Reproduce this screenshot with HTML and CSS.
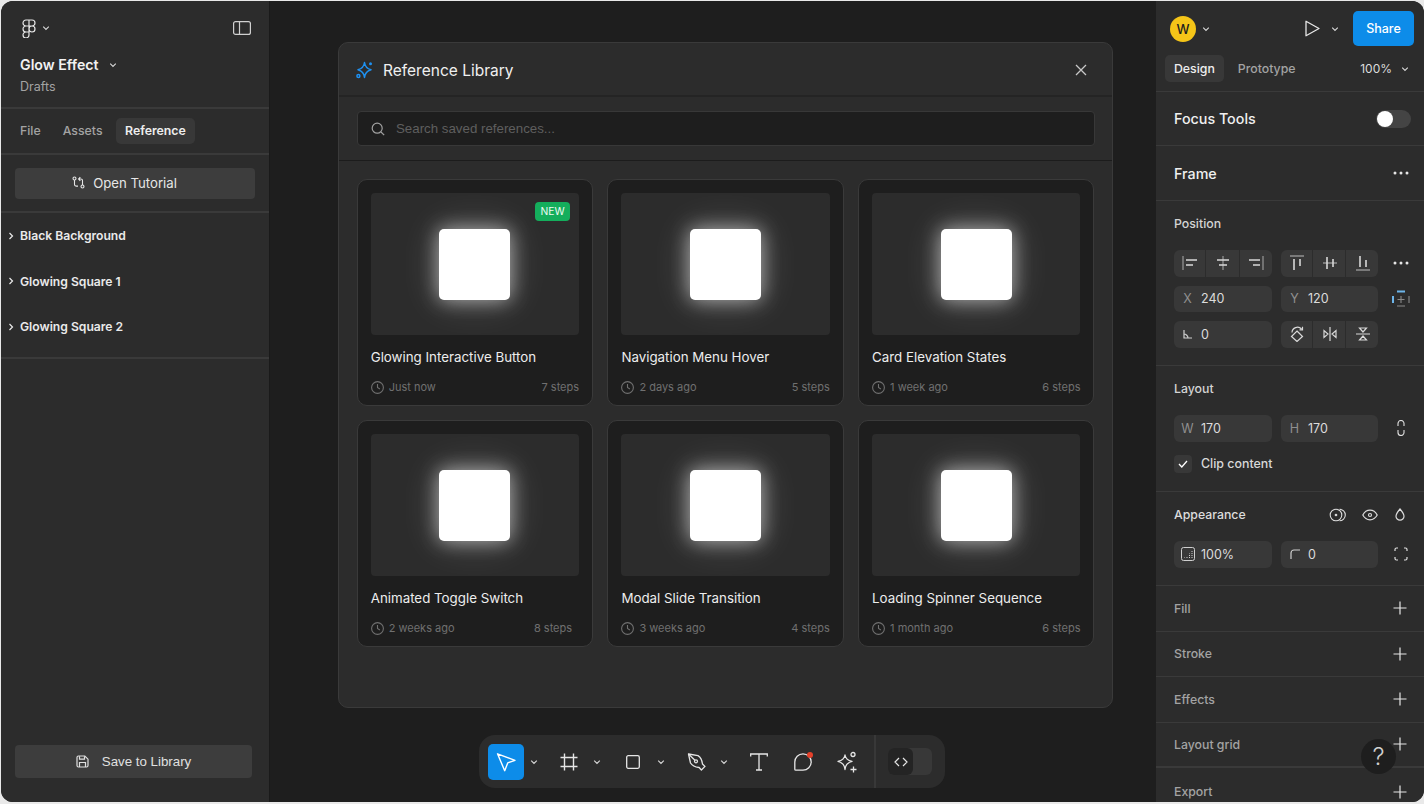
FILE: index.html
```html
<!DOCTYPE html>
<html lang="en">
<head>
    <meta charset="UTF-8">
    <title>Glow Effect</title>
    <link rel="stylesheet" href="styles.css">
</head>
<body>
    <svg class="defs" width="0" height="0">
        <symbol id="chev" viewBox="0 0 8 8"><path d="M1.2 2.6 4 5.4l2.8-2.8" fill="none" stroke="currentColor" stroke-width="1.2"/></symbol>
        <symbol id="plus" viewBox="0 0 14 14"><path d="M7 .5v13M.5 7h13" fill="none" stroke="currentColor" stroke-width="1.2"/></symbol>
        <symbol id="clock" viewBox="0 0 13 13"><g fill="none" stroke="currentColor" stroke-width="1.1"><circle cx="6.5" cy="6.5" r="5.9"/><path d="M6.5 3v3.5l2.4 1.4"/></g></symbol>
        <symbol id="dots" viewBox="0 0 16 4"><g fill="currentColor"><circle cx="2" cy="2" r="1.5"/><circle cx="8" cy="2" r="1.5"/><circle cx="14" cy="2" r="1.5"/></g></symbol>
    </svg>

    <div class="app">
        <aside class="left-panel">
            <div class="file-head">
                <div class="logo-row">
                    <svg class="logo" width="14" height="19" viewBox="0 0 14 19" fill="none" stroke="currentColor" stroke-width="1.2"><path d="M7 1H4a3 3 0 0 0 0 6h3zM7 1h3a3 3 0 0 1 0 6H7zM7 7H4a3 3 0 0 0 0 6h3zM7 13H4a3 3 0 1 0 3 3zM13 10a3 3 0 1 1-6 0 3 3 0 0 1 6 0z"/></svg>
                    <svg class="chev" width="8" height="8"><use href="#chev"/></svg>
                    <svg class="panel-toggle" width="18" height="14" viewBox="0 0 18 14" fill="none" stroke="currentColor" stroke-width="1.2"><rect x=".6" y=".6" width="16.8" height="12.8" rx="2"/><path d="M6.5 1v12"/></svg>
                </div>
                <div class="title-row">
                    <span class="file-title">Glow Effect</span>
                    <svg class="chev" width="8" height="8"><use href="#chev"/></svg>
                </div>
                <div class="file-sub">Drafts</div>
            </div>
            <nav class="left-tabs">
                <span class="left-tab">File</span>
                <span class="left-tab">Assets</span>
                <span class="left-tab active">Reference</span>
            </nav>
            <div class="tutorial-wrap">
                <button class="wide-btn tutorial-btn">
                    <svg width="13" height="13" viewBox="0 0 13 13" fill="none" stroke="currentColor" stroke-width="1.1"><circle cx="2.5" cy="2.5" r="1.5"/><circle cx="10.5" cy="10.5" r="1.5"/><path d="M2.5 4v4.5c0 1 .6 1.6 1.6 1.6H6M10.5 9V4.6C10.5 3.6 9.9 3 8.9 3H7M8.3 1.2 6.6 3l1.7 1.8"/></svg>
                    <span>Open Tutorial</span>
                </button>
            </div>
            <ul class="layers">
                <li class="layer"><svg width="6" height="8" viewBox="0 0 6 8"><path d="M1.5 1 4.5 4l-3 3" fill="none" stroke="currentColor" stroke-width="1.2"/></svg>Black Background</li>
                <li class="layer"><svg width="6" height="8" viewBox="0 0 6 8"><path d="M1.5 1 4.5 4l-3 3" fill="none" stroke="currentColor" stroke-width="1.2"/></svg>Glowing Square 1</li>
                <li class="layer"><svg width="6" height="8" viewBox="0 0 6 8"><path d="M1.5 1 4.5 4l-3 3" fill="none" stroke="currentColor" stroke-width="1.2"/></svg>Glowing Square 2</li>
            </ul>
            <div class="left-foot">
                <button class="wide-btn save-btn">
                    <svg width="13" height="13" viewBox="0 0 13 13" fill="none" stroke="currentColor" stroke-width="1.2"><path d="M1 2.500C1 1.700 1.700 1 2.500 1h6.300L12 4.200v6.300c0 .8-.7 1.500-1.500 1.500h-8c-.8 0-1.500-.7-1.500-1.500z"/><path d="M3.500 1.200v3h5v-3M3.500 12V7.500h6V12"/></svg>
                    <span>Save to Library</span>
                </button>
            </div>
        </aside>

        <main class="canvas">
            <section class="modal">
                <header class="modal-head">
                    <svg class="spark" width="18" height="18" viewBox="0 0 18 18" fill="none" stroke="currentColor" stroke-width="1.5" stroke-linejoin="round"><path d="M8.500 1.500C9 5.500 10.500 7.500 15 8.800 10.500 10 9 12 8.500 16.500 8 12 6.500 10 2 8.800 6.500 7.500 8 5.500 8.500 1.500z"/><circle cx="14.500" cy="2.800" r="1.500" fill="currentColor" stroke="none"/><circle cx="2.400" cy="15" r="1.500"/></svg>
                    <h2 class="modal-title">Reference Library</h2>
                    <svg class="modal-close" width="12" height="12" viewBox="0 0 12 12"><path d="M1 1l10 10M11 1 1 11" fill="none" stroke="currentColor" stroke-width="1.3"/></svg>
                </header>
                <div class="search-wrap">
                    <div class="search-box">
                        <svg width="14" height="14" viewBox="0 0 14 14" fill="none" stroke="currentColor" stroke-width="1.2"><circle cx="6.200" cy="6.200" r="5"/><path d="m10 10 3.200 3.200"/></svg>
                        <input class="search-input" type="text" placeholder="Search saved references...">
                    </div>
                </div>
                <div class="ref-grid">
                    <article class="ref-card">
                        <div class="ref-preview"><div class="glow-square"></div><span class="new-badge">NEW</span></div>
                        <h3 class="ref-name">Glowing Interactive Button</h3>
                        <div class="ref-meta"><span class="ref-when"><svg width="13" height="13"><use href="#clock"/></svg>Just now</span><span>7 steps</span></div>
                    </article>
                    <article class="ref-card">
                        <div class="ref-preview"><div class="glow-square"></div></div>
                        <h3 class="ref-name">Navigation Menu Hover</h3>
                        <div class="ref-meta"><span class="ref-when"><svg width="13" height="13"><use href="#clock"/></svg>2 days ago</span><span>5 steps</span></div>
                    </article>
                    <article class="ref-card">
                        <div class="ref-preview"><div class="glow-square"></div></div>
                        <h3 class="ref-name">Card Elevation States</h3>
                        <div class="ref-meta"><span class="ref-when"><svg width="13" height="13"><use href="#clock"/></svg>1 week ago</span><span>6 steps</span></div>
                    </article>
                    <article class="ref-card">
                        <div class="ref-preview"><div class="glow-square"></div></div>
                        <h3 class="ref-name">Animated Toggle Switch</h3>
                        <div class="ref-meta"><span class="ref-when"><svg width="13" height="13"><use href="#clock"/></svg>2 weeks ago</span><span class="steps-in">8 steps</span></div>
                    </article>
                    <article class="ref-card">
                        <div class="ref-preview"><div class="glow-square"></div></div>
                        <h3 class="ref-name">Modal Slide Transition</h3>
                        <div class="ref-meta"><span class="ref-when"><svg width="13" height="13"><use href="#clock"/></svg>3 weeks ago</span><span>4 steps</span></div>
                    </article>
                    <article class="ref-card">
                        <div class="ref-preview"><div class="glow-square"></div></div>
                        <h3 class="ref-name">Loading Spinner Sequence</h3>
                        <div class="ref-meta"><span class="ref-when"><svg width="13" height="13"><use href="#clock"/></svg>1 month ago</span><span>6 steps</span></div>
                    </article>
                </div>
            </section>

            <div class="toolbar">
                <span class="tool active">
                    <svg width="22" height="22" viewBox="0 0 22 22" fill="none" stroke="currentColor" stroke-width="1.4" stroke-linejoin="round"><path d="M2.500 2.800 20 9.300l-7.300 2.600-3 7.800z"/></svg>
                </span>
                <svg class="tool-chev" width="8" height="8"><use href="#chev"/></svg>
                <span class="tool gap-left">
                    <svg width="18" height="18" viewBox="0 0 18 18" fill="none" stroke="currentColor" stroke-width="1.4"><path d="M4.500.5v17M13.500.5v17M.5 4.500h17M.5 13.500h17"/></svg>
                </span>
                <svg class="tool-chev" width="8" height="8"><use href="#chev"/></svg>
                <span class="tool gap-left">
                    <svg width="14" height="14" viewBox="0 0 14 14" fill="none" stroke="currentColor" stroke-width="1.3"><rect x=".7" y=".7" width="12.600" height="12.600" rx="1.500"/></svg>
                </span>
                <svg class="tool-chev" width="8" height="8"><use href="#chev"/></svg>
                <span class="tool gap-left">
                    <svg width="20" height="20" viewBox="0 0 20 20" fill="none" stroke="currentColor" stroke-width="1.3" stroke-linejoin="round"><path d="M1.500 2 11 3.600c2.500 1.500 4 4 4.500 8.500l2.500 2.300-3.600 3.600-2.300-2.500C7.500 15 5 13.500 3.500 11z"/><circle cx="9" cy="9.300" r="1.500"/><path d="M1.500 2 7.900 8.200"/></svg>
                </span>
                <svg class="tool-chev tight" width="8" height="8"><use href="#chev"/></svg>
                <span class="tool gap-left">
                    <svg width="18" height="18" viewBox="0 0 18 18" fill="none" stroke="currentColor" stroke-width="1.3"><path d="M.7 3.500V1h16.600v2.500M9 1v16M6 17h6"/></svg>
                </span>
                <span class="tool gap-left comment-tool">
                    <svg width="20" height="20" viewBox="0 0 20 20" fill="none" stroke="currentColor" stroke-width="1.3"><path d="M10 1.800a8 8 0 0 1 0 16.400H2.800a1 1 0 0 1-1-1V10A8.200 8.200 0 0 1 10 1.800z"/></svg>
                    <i class="red-dot"></i>
                </span>
                <span class="tool gap-left">
                    <svg width="22" height="22" viewBox="0 0 22 22" fill="none" stroke="currentColor" stroke-width="1.3" stroke-linejoin="round"><path d="M9 4C9.500 7.500 11 9.200 16 10.500 11 12 9.500 14 9 18.500 8.500 14 7 12 2 10.500 7 9.200 8.500 7.500 9 4z"/><circle cx="17" cy="3.500" r="2"/><path d="M17.500 15.500v6M14.500 18.500h6"/></svg>
                </span>
                <i class="tool-divider"></i>
                <span class="code-toggle"><span class="code-knob"><svg width="14" height="10" viewBox="0 0 14 10" fill="none" stroke="currentColor" stroke-width="1.2"><path d="M5 1 1 5l4 4M9 1l4 4-4 4"/></svg></span></span>
            </div>
        </main>

        <aside class="right-panel">
            <div class="top-block">
                <div class="top-row">
                    <span class="avatar">W</span>
                    <svg class="chev" width="8" height="8"><use href="#chev"/></svg>
                    <svg class="play" width="15" height="17" viewBox="0 0 15 17" fill="none" stroke="currentColor" stroke-width="1.3" stroke-linejoin="round"><path d="M1 1.200v14.600L14 8.500z"/></svg>
                    <svg class="chev" width="8" height="8"><use href="#chev"/></svg>
                    <button class="share-btn">Share</button>
                </div>
                <div class="mode-row">
                    <span class="mode-tab active">Design</span>
                    <span class="mode-tab">Prototype</span>
                    <span class="zoom-val">100%</span>
                    <svg class="chev" width="8" height="8"><use href="#chev"/></svg>
                </div>
            </div>

            <section class="prop-row focus-row">
                <span class="prop-strong">Focus Tools</span>
                <span class="switch"><i class="switch-thumb"></i></span>
            </section>
            <section class="prop-row frame-row">
                <span class="prop-strong">Frame</span>
                <svg class="dots" width="16" height="4"><use href="#dots"/></svg>
            </section>

            <section class="prop-block position-block">
                <div class="prop-label">Position</div>
                <div class="field-grid">
                    <div class="seg">
                        <span><svg width="16" height="16" viewBox="0 0 16 16" fill="none" stroke="currentColor" stroke-width="1.3"><path d="M1 1v14" opacity=".55"/><path d="M4 5h11M4 10h7" stroke-width="1.6"/></svg></span>
                        <span><svg width="16" height="16" viewBox="0 0 16 16" fill="none" stroke="currentColor" stroke-width="1.3"><path d="M8 1v14" opacity=".55"/><path d="M2 5h12M4 10h8" stroke-width="1.6"/></svg></span>
                        <span><svg width="16" height="16" viewBox="0 0 16 16" fill="none" stroke="currentColor" stroke-width="1.3"><path d="M15 1v14" opacity=".55"/><path d="M1 5h11M5 10h7" stroke-width="1.6"/></svg></span>
                    </div>
                    <div class="seg">
                        <span><svg width="16" height="16" viewBox="0 0 16 16" fill="none" stroke="currentColor" stroke-width="1.3"><path d="M1 1h14" opacity=".55"/><path d="M5 4v11M11 4v7" stroke-width="1.6"/></svg></span>
                        <span><svg width="16" height="16" viewBox="0 0 16 16" fill="none" stroke="currentColor" stroke-width="1.3"><path d="M1 8h14" opacity=".55"/><path d="M5 2v12M11 4v8" stroke-width="1.6"/></svg></span>
                        <span><svg width="16" height="16" viewBox="0 0 16 16" fill="none" stroke="currentColor" stroke-width="1.3"><path d="M1 15h14" opacity=".55"/><path d="M5 1v11M11 5v7" stroke-width="1.6"/></svg></span>
                    </div>
                    <span class="side-icon"><svg class="dots" width="16" height="4"><use href="#dots"/></svg></span>

                    <div class="field"><b>X</b>240</div>
                    <div class="field"><b>Y</b>120</div>
                    <span class="side-icon"><svg width="18" height="18" viewBox="0 0 18 18" fill="none" stroke-width="1.5"><path d="M5 1.500h8M1 6v7" stroke="#6db5ea" stroke-width="2"/><path d="M5 16h8M17 6v7M9 6v7M5.500 9.500h7" stroke="#8a8a8a" stroke-width="1.1"/></svg></span>

                    <div class="field"><b class="icon-b"><svg width="10" height="10" viewBox="0 0 10 10" fill="none" stroke="currentColor" stroke-width="1.2"><path d="M1 1v8h8M1 5c2 0 4 2 4 4"/></svg></b>0</div>
                    <div class="seg">
                        <span><svg width="14" height="16" viewBox="0 0 14 16" fill="none" stroke="currentColor" stroke-width="1.2"><path d="M7 5 12.500 10.500 7 15.500 1.500 10.500zM2 6.500A5.500 5.500 0 0 1 11.500 3M12.500 .8v3h-3"/></svg></span>
                        <span><svg width="14" height="14" viewBox="0 0 14 14" fill="none" stroke="currentColor" stroke-width="1.2"><path d="M7 0v14M1 3.500v7L5 7zM13 3.500v7L9 7z"/></svg></span>
                        <span><svg width="14" height="14" viewBox="0 0 14 14" fill="none" stroke="currentColor" stroke-width="1.2"><path d="M0 7h14M3.500 1h7L7 5zM3.500 13h7L7 9z"/></svg></span>
                    </div>
                </div>
            </section>

            <section class="prop-block layout-block">
                <div class="prop-label">Layout</div>
                <div class="field-grid">
                    <div class="field"><b>W</b>170</div>
                    <div class="field"><b>H</b>170</div>
                    <span class="side-icon"><svg width="8" height="16" viewBox="0 0 8 16" fill="none" stroke="currentColor" stroke-width="1.1"><path d="M1 6V3.500a3 3 0 0 1 6 0V6M1 10v2.500a3 3 0 0 0 6 0V10"/></svg></span>
                </div>
                <label class="clip-row">
                    <span class="check-box"><svg width="10" height="8" viewBox="0 0 10 8" fill="none" stroke="currentColor" stroke-width="1.3"><path d="m1 4 2.800 3L9 1"/></svg></span>
                    Clip content
                </label>
            </section>

            <section class="prop-block appearance-block">
                <div class="prop-head">
                    <span class="prop-label">Appearance</span>
                    <span class="head-icons">
                        <svg width="17" height="14" viewBox="0 0 17 14" fill="none" stroke="currentColor" stroke-width="1.1"><circle cx="7" cy="7" r="5.800"/><circle cx="7" cy="7" r=".8" fill="currentColor"/><path d="M10.500 1.200a5.800 5.800 0 0 1 0 11.600"/></svg>
                        <svg width="16" height="12" viewBox="0 0 16 12" fill="none" stroke="currentColor" stroke-width="1.2"><path d="M.8 6C2.500 2.800 5 1.200 8 1.200s5.500 1.600 7.200 4.800c-1.700 3.200-4.200 4.800-7.200 4.800S2.500 9.200.8 6z"/><circle cx="8" cy="6" r="1.500"/></svg>
                        <svg class="drop-icon" width="10" height="14" viewBox="0 0 10 14" fill="none" stroke="currentColor" stroke-width="1.2"><path d="M5 1c2.500 3 4 5 4 7.200A4 4 0 0 1 1 8.200C1 6 2.500 4 5 1z"/></svg>
                    </span>
                </div>
                <div class="field-grid">
                    <div class="field"><b class="icon-b"><svg width="14" height="14" viewBox="0 0 14 14" fill="none" stroke="currentColor" stroke-width="1"><rect x=".5" y=".5" width="13" height="13" rx="2"/><path d="M3.500 11v-.5M6 11V9M8.500 11V6.500M11 11V4" stroke-dasharray="1 1"/></svg></b>100%</div>
                    <div class="field"><b class="icon-b"><svg width="10" height="10" viewBox="0 0 10 10" fill="none" stroke="currentColor" stroke-width="1.2"><path d="M1 10V4a3 3 0 0 1 3-3h6"/></svg></b>0</div>
                    <span class="side-icon"><svg width="14" height="14" viewBox="0 0 14 14" fill="none" stroke="currentColor" stroke-width="1.2"><path d="M1 4V2.500C1 1.700 1.700 1 2.500 1H4M10 1h1.500c.8 0 1.500.7 1.500 1.500V4M13 10v1.500c0 .8-.7 1.500-1.500 1.500H10M4 13H2.500C1.700 13 1 12.300 1 11.500V10"/></svg></span>
                </div>
            </section>

            <section class="add-row"><span>Fill</span><svg width="14" height="14"><use href="#plus"/></svg></section>
            <section class="add-row"><span>Stroke</span><svg width="14" height="14"><use href="#plus"/></svg></section>
            <section class="add-row"><span>Effects</span><svg width="14" height="14"><use href="#plus"/></svg></section>
            <section class="add-row thick"><span>Layout grid</span><svg width="14" height="14"><use href="#plus"/></svg></section>
            <section class="add-row last"><span>Export</span><svg width="14" height="14"><use href="#plus"/></svg></section>

            <button class="help-btn">?</button>
        </aside>
    </div>
</body>
</html>
```

FILE: styles.css
```css
* {
    box-sizing: border-box;
}
html, body {
    height: 100%;
    overflow: hidden;
}
body {
    margin: 0;
    padding: 1px 0 2px 1px;
    background-color: #e9e9e9;
    font-family: Inter, "Liberation Sans", sans-serif;
    color: #e6e6e6;
}
button {
    border: none;
    font: inherit;
    color: inherit;
}
svg {
    display: block;
    flex: none;
}
.defs {
    position: absolute;
}
.app {
    display: grid;
    grid-template-columns: 269px 886px 1fr;
    height: 100%;
    background-color: #1e1e1e;
    border-radius: 12px;
    overflow: hidden;
}

/* left panel */
.left-panel {
    display: flex;
    flex-direction: column;
    background-color: #2c2c2c;
    border-right: 1px solid #1a1a1a;
}
.file-head {
    height: 108px;
    padding: 16px 18px 0 19px;
    border-bottom: 2px solid #3a3a3a;
}
.logo-row {
    display: flex;
    align-items: center;
    height: 22px;
}
.logo {
    margin-left: 2px;
    color: #e6e6e6;
}
.logo-row .chev {
    margin-left: 6px;
}
.panel-toggle {
    margin-left: auto;
    color: #d0d0d0;
}
.chev {
    color: #d5d5d5;
}
.title-row {
    display: flex;
    align-items: center;
    gap: 10px;
    margin-top: 15px;
}
.file-title {
    font-size: 14.2px;
    font-weight: 600;
    line-height: 22px;
    color: #f2f2f2;
}
.file-sub {
    margin-top: 3px;
    font-size: 12.5px;
    line-height: 16px;
    color: #a3a3a3;
}
.left-tabs {
    display: flex;
    align-items: center;
    gap: 2px;
    height: 46px;
    padding: 0 9px;
    border-bottom: 2px solid #3a3a3a;
}
.left-tab {
    padding: 0 10px;
    font-size: 12.3px;
    font-weight: 500;
    line-height: 26px;
    color: #a3a3a3;
}
.left-tab.active {
    margin-left: 1px;
    padding: 0 9.5px;
    background-color: #383838;
    border-radius: 5px;
    color: #eeeeee;
    font-weight: 600;
}
.tutorial-wrap {
    height: 58px;
    padding: 13px 14px 0 14px;
    border-bottom: 2px solid #3a3a3a;
}
.wide-btn {
    display: flex;
    align-items: center;
    justify-content: center;
    width: 100%;
    background-color: #3d3d3d;
    border-radius: 4px;
}
.tutorial-btn {
    gap: 8px;
    height: 31px;
    padding: 0 21px 2px 0;
    font-size: 13.2px;
    color: #e6e6e6;
}
.layers {
    list-style: none;
    margin: 0;
    padding: 0;
    height: 146px;
    border-bottom: 2px solid #3a3a3a;
}
.layer {
    display: flex;
    align-items: center;
    gap: 6px;
    height: 45.5px;
    padding-left: 7px;
    font-size: 12.15px;
    font-weight: 600;
    color: #eaeaea;
}
.left-foot {
    margin-top: auto;
    padding: 0 17px 24px 14px;
}
.save-btn {
    gap: 13px;
    height: 33px;
    font-family: "Liberation Sans", sans-serif;
    font-size: 13.3px;
    color: #e0e0e0;
}

/* canvas and modal */
.canvas {
    display: flex;
    flex-direction: column;
    align-items: flex-start;
    padding: 41px 0 0 68px;
    overflow: hidden;
}
.modal {
    width: 775px;
    height: 666px;
    background-color: #2c2c2c;
    border: 1px solid #3a3a3a;
    border-radius: 10px;
}
.modal-head {
    display: flex;
    align-items: center;
    height: 54px;
    padding: 2px 25px 0 17px;
    border-bottom: 2px solid #242424;
}
.spark {
    color: #1e90f0;
}
.modal-title {
    flex: 1;
    margin: 0 0 0 9px;
    font-size: 15.5px;
    font-weight: 400;
    color: #f0f0f0;
}
.modal-close {
    color: #c8c8c8;
}
.search-wrap {
    height: 64px;
    padding: 14px 17px 0 18px;
    border-bottom: 1px solid #1c1c1c;
}
.search-box {
    display: flex;
    align-items: center;
    gap: 11px;
    height: 35px;
    padding-left: 13px;
    background-color: #1e1e1e;
    border: 1px solid #383838;
    border-radius: 4px;
    color: #a0a0a0;
}
.search-input {
    flex: 1;
    padding: 0;
    background: transparent;
    border: none;
    outline: none;
    font-family: "Liberation Sans", sans-serif;
    font-size: 13.3px;
    color: #e6e6e6;
}
.search-input::placeholder {
    color: #5f5f5f;
}
.ref-grid {
    display: grid;
    grid-template-columns: repeat(3, 236.4px);
    grid-auto-rows: 227px;
    gap: 14px 14.3px;
    padding: 18px 0 0 17.7px;
}
.ref-card {
    padding: 13px 13px 0 13px;
    background-color: #1e1e1e;
    border: 1px solid #3a3a3a;
    border-radius: 10px;
}
.ref-preview {
    position: relative;
    display: flex;
    align-items: center;
    justify-content: center;
    height: 142px;
    background-color: #2c2c2c;
    border-radius: 4px;
}
.glow-square {
    width: 71px;
    height: 71px;
    background-color: #ffffff;
    border-radius: 5px;
    box-shadow: 0 0 20px rgba(255, 255, 255, 0.6), 0 0 40px rgba(255, 255, 255, 0.2);
}
.new-badge {
    position: absolute;
    top: 9px;
    right: 9px;
    width: 35px;
    background-color: #14ae5c;
    border-radius: 4px;
    font-size: 10.3px;
    line-height: 19px;
    text-align: center;
    color: #eefbf3;
}
.ref-name {
    margin: 12px 0 0 0;
    font-size: 13.33px;
    font-weight: 400;
    line-height: 20px;
    color: #ededed;
}
.ref-meta {
    display: flex;
    justify-content: space-between;
    margin-top: 12px;
    font-size: 11px;
    line-height: 16px;
    color: #707070;
}
.ref-when {
    display: flex;
    align-items: center;
    gap: 5px;
}
.steps-in {
    margin-right: 7px;
}

/* toolbar */
.toolbar {
    display: flex;
    align-items: center;
    width: 466px;
    height: 53px;
    margin: 27px 0 0 141px;
    padding: 0 13px 0 9px;
    background-color: #2c2c2c;
    border-radius: 16px;
}
.tool {
    display: flex;
    align-items: center;
    justify-content: center;
    width: 36px;
    height: 36px;
    color: #e6e6e6;
}
.tool.active {
    background-color: #0d8ce9;
    border-radius: 5px;
    color: #ffffff;
}
.tool.gap-left {
    margin-left: 8px;
}
.tool-chev {
    width: 20px;
    padding: 0 6px;
    color: #d5d5d5;
}
.tool-chev.tight {
    margin-left: -1px;
}
.comment-tool {
    position: relative;
}
.red-dot {
    position: absolute;
    top: 8px;
    right: 8px;
    width: 6px;
    height: 6px;
    background-color: #e5402a;
    border-radius: 50%;
}
.tool-divider {
    width: 2px;
    height: 53px;
    margin-left: 10px;
    background-color: #383838;
}
.code-toggle {
    display: block;
    width: 44px;
    height: 27px;
    margin-left: 12px;
    background-color: #383838;
    border-radius: 6px;
}
.code-knob {
    display: flex;
    align-items: center;
    justify-content: center;
    width: 25px;
    height: 27px;
    background-color: #242424;
    border-radius: 6px;
    color: #e6e6e6;
}

/* right panel */
.right-panel {
    position: relative;
    display: flex;
    flex-direction: column;
    background-color: #2c2c2c;
    overflow: hidden;
}
.right-panel > section,
.right-panel > div {
    flex: none;
}
.top-block {
    height: 91px;
    padding: 10px 10px 0 9px;
    border-bottom: 1px solid #3a3a3a;
}
.top-row {
    display: flex;
    align-items: center;
    height: 35px;
}
.avatar {
    width: 26px;
    height: 26px;
    margin-left: 5px;
    background-color: #f5c518;
    border-radius: 50%;
    font-size: 13px;
    font-weight: 500;
    line-height: 26px;
    text-align: center;
    color: #1e1e1e;
}
.top-row .chev {
    margin-left: 6px;
}
.play {
    margin-left: auto;
    color: #e6e6e6;
}
.top-row .play + .chev {
    margin-left: 11px;
}
.share-btn {
    width: 61px;
    height: 35px;
    margin-left: 14px;
    background-color: #0d8ce9;
    border-radius: 5px;
    font-size: 12.5px;
    font-weight: 500;
    color: #ffffff;
}
.mode-row {
    display: flex;
    align-items: center;
    gap: 5px;
    margin-top: 9px;
    padding-right: 5px;
}
.mode-tab {
    padding: 0 9px;
    font-size: 12.3px;
    font-weight: 500;
    line-height: 27px;
    color: #a3a3a3;
}
.mode-tab.active {
    background-color: #383838;
    border-radius: 5px;
    color: #eeeeee;
}
.zoom-val {
    margin-left: auto;
    font-size: 12px;
    color: #dcdcdc;
}
.mode-row .chev {
    margin-left: 4px;
}
.prop-row {
    display: flex;
    align-items: center;
    justify-content: space-between;
    padding: 0 15px 0 18px;
    border-bottom: 1px solid #3a3a3a;
}
.focus-row {
    height: 54px;
    padding-right: 13px;
}
.frame-row {
    height: 55px;
}
.prop-strong {
    font-size: 14.3px;
    font-weight: 500;
    color: #f0f0f0;
}
.switch {
    display: block;
    width: 35px;
    height: 18px;
    padding: 1px;
    background-color: #444444;
    border-radius: 9px;
}
.switch-thumb {
    display: block;
    width: 16px;
    height: 16px;
    background-color: #ffffff;
    border-radius: 50%;
}
.dots {
    color: #e6e6e6;
}
.prop-block {
    padding: 15px 0 0 18px;
    border-bottom: 1px solid #3a3a3a;
}
.position-block {
    height: 165px;
}
.layout-block {
    height: 126px;
}
.appearance-block {
    height: 94px;
}
.prop-label {
    font-size: 12.3px;
    font-weight: 500;
    line-height: 16px;
    color: #d4d4d4;
}
.field-grid {
    display: grid;
    grid-template-columns: 98px 97px 27px;
    grid-auto-rows: 26.5px;
    gap: 9px;
    margin-top: 18px;
}
.seg {
    display: flex;
    gap: 1px;
    background-color: #383838;
    border-radius: 6px;
    overflow: hidden;
    color: #d8d8d8;
}
.seg span {
    display: flex;
    flex: 1;
    align-items: center;
    justify-content: center;
    border-right: 1px solid #2c2c2c;
}
.seg span:last-child {
    border-right: none;
}
.field {
    display: flex;
    align-items: center;
    background-color: #383838;
    border-radius: 6px;
    font-size: 12.5px;
    color: #dcdcdc;
}
.field b {
    display: flex;
    justify-content: center;
    width: 27px;
    font-weight: 400;
    color: #8f8f8f;
}
.field b.icon-b {
    color: #cfcfcf;
}
.side-icon {
    display: flex;
    align-items: center;
    justify-content: center;
    color: #e0e0e0;
}
.clip-row {
    display: flex;
    align-items: center;
    gap: 9px;
    margin-top: 13px;
    font-size: 12.4px;
    font-weight: 500;
    color: #d8d8d8;
}
.check-box {
    display: flex;
    align-items: center;
    justify-content: center;
    width: 18px;
    height: 18px;
    background-color: #383838;
    border-radius: 4px;
    color: #ffffff;
}
.prop-head {
    display: flex;
    align-items: center;
    justify-content: space-between;
    padding-right: 19px;
}
.appearance-block .prop-label {
    color: #dcdcdc;
}
.head-icons {
    display: flex;
    align-items: center;
    gap: 16px;
    color: #dcdcdc;
}
.drop-icon {
    margin-left: 1px;
}
.add-row {
    display: flex;
    align-items: center;
    justify-content: space-between;
    height: 45.5px;
    padding: 0 17px 0 18px;
    border-bottom: 1px solid #3a3a3a;
    font-size: 12.3px;
    font-weight: 500;
    color: #a3a3a3;
}
.add-row svg {
    color: #e6e6e6;
}
.add-row.thick {
    border-bottom-width: 2px;
}
.add-row.last {
    padding-top: 2px;
    border-bottom: none;
}
.help-btn {
    position: absolute;
    right: 28px;
    bottom: 28px;
    width: 35px;
    height: 35px;
    padding: 0;
    background-color: #1e1e1e;
    border-radius: 50%;
    font-size: 24px;
    font-weight: 300;
    color: #d0d0d0;
}
```
